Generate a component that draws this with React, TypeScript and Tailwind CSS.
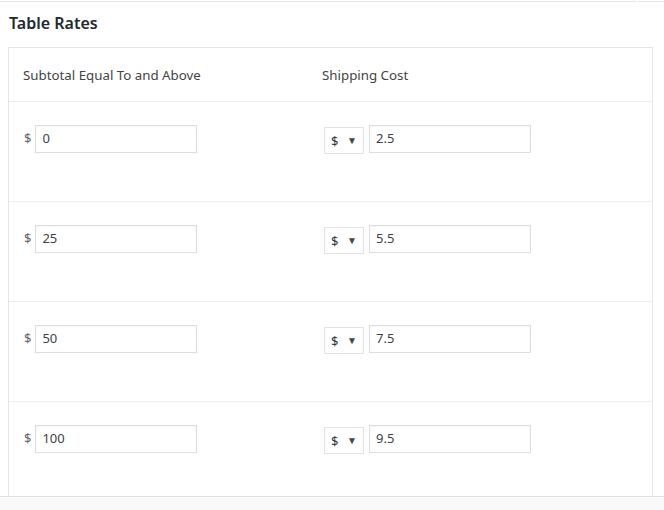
const rates = [
  { min: "0", cost: "2.5" },
  { min: "25", cost: "5.5" },
  { min: "50", cost: "7.5" },
  { min: "100", cost: "9.5" },
];

function RateRow({ min, cost }: { min: string; cost: string }) {
  return (
    <div className="flex h-[100px] border-t border-[#eeeeee]">
      <div className="flex w-[300px] items-start pl-[15px] pt-[23px]">
        <span className="mr-[4px] mt-[4px] text-[13px] text-[#666666]">$</span>
        <div className="flex h-[28px] w-[162px] items-center border border-[#dddddd] px-[6px] text-[13px] text-[#3c4146] shadow-[inset_0_1px_2px_rgba(0,0,0,0.04)]">
          {min}
        </div>
      </div>
      <div className="flex items-start pl-[15px] pt-[23px]">
        <div className="mt-[2px] flex h-[27px] w-[40px] items-center justify-between border border-[#e2e2e2] pl-[6px] pr-[6px] text-[13px] text-[#32373c]">
          <span className="mt-[2px]">$</span>
          <span className="text-[10px] text-[#444444]">▼</span>
        </div>
        <div className="ml-[5px] flex h-[28px] w-[162px] items-center border border-[#dddddd] px-[6px] text-[13px] text-[#3c4146] shadow-[inset_0_1px_2px_rgba(0,0,0,0.04)]">
          {cost}
        </div>
      </div>
    </div>
  );
}

export default function App() {
  return (
    <div
      className="relative h-[510px] w-[664px] overflow-hidden bg-white"
      style={{ fontFamily: '"Noto Sans", "Open Sans", sans-serif' }}
    >
      {/* remnant of the section above */}
      <div className="flex h-[3px]">
        <div className="mt-[1px] h-[1px] w-[636px] bg-[#e4e4e4]" />
        <div className="mt-[1px] ml-[2px] h-[1px] flex-1 bg-[#e4e4e4]" />
      </div>

      <h2 className="ml-[9px] mt-[9px] text-[16px] font-semibold leading-[22px] text-[#23282d]">
        Table Rates
      </h2>

      <div className="ml-[8px] mt-[13px] w-[645px] border border-[#e5e5e5] bg-white">
        <div className="flex h-[53px] items-center pt-[2px] text-[13.3px] text-[#444444]">
          <div className="w-[300px] pl-[14px]">Subtotal Equal To and Above</div>
          <div className="pl-[13px]">Shipping Cost</div>
        </div>
        {rates.map((r) => (
          <RateRow key={r.min} min={r.min} cost={r.cost} />
        ))}
      </div>

      {/* sticky footer bar */}
      <div className="absolute bottom-0 left-0 right-0 h-[14px] border-t border-[#e2e2e2] bg-[#f9f9f9]" />
    </div>
  );
}
